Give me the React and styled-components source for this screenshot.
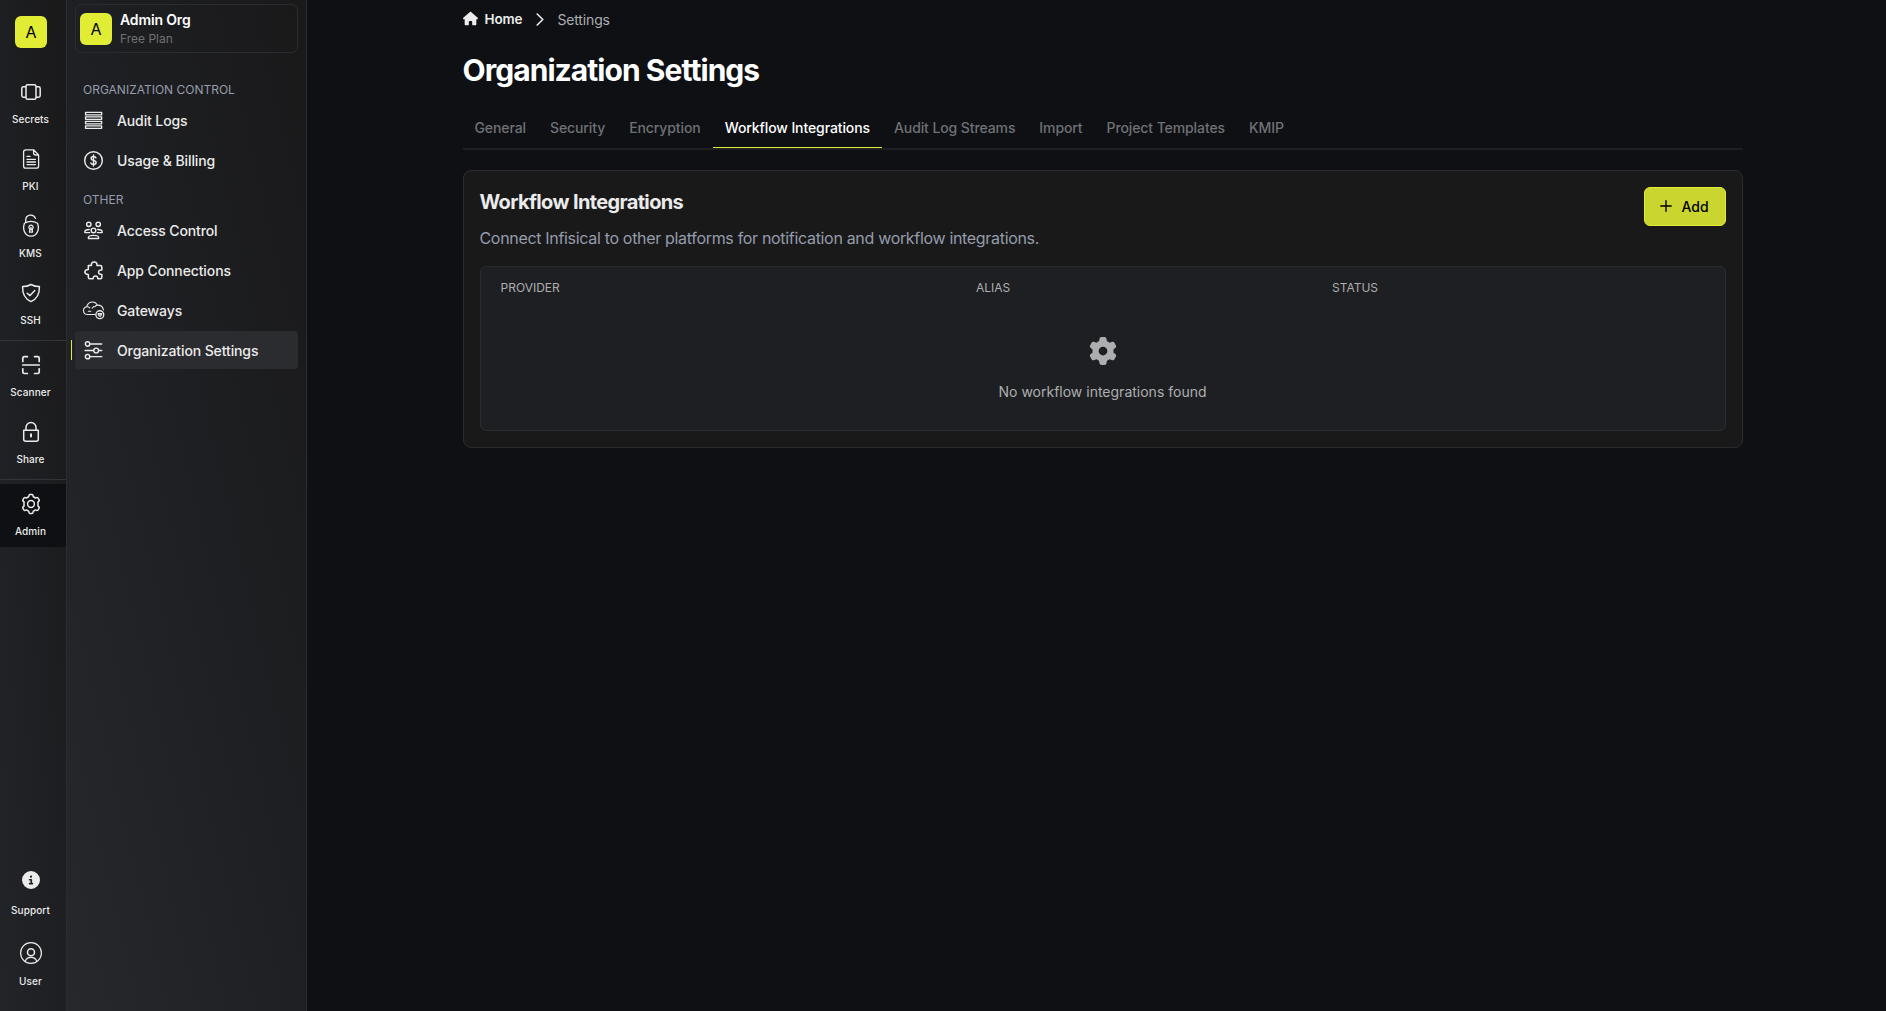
import React from "react";
import styled, { createGlobalStyle } from "styled-components";
import { FaCircleInfo, FaGear, FaHouse } from "react-icons/fa6";

const color = {
  primary: "#e0ed34",
  page: "#0e1014",
  panel: "#19191a",
  surface: "#1e1f22",
  line: "#2b2c30",
  lineStrong: "#323439",
  text: "#ebebeb",
  muted: "#adaeb0",
  dim: "#707174",
  slate: "#959cab",
};

const GlobalStyle = createGlobalStyle`
  *, *::before, *::after { box-sizing: border-box; }
  body {
    margin: 0;
    background: ${color.page};
    color: ${color.text};
    font-family: Inter, "Liberation Sans", sans-serif;
    font-size: 14px;
    -webkit-font-smoothing: antialiased;
  }
  h1, h2, p { margin: 0; }
`;

const Shell = styled.div`
  display: flex;
  height: 1011px;
  overflow: hidden;
  background: ${color.page};
`;

const Rail = styled.nav`
  width: 67px;
  flex: none;
  display: flex;
  flex-direction: column;
  padding: 16px 0 15px;
  border-right: 1px solid ${color.line};
  background: linear-gradient(to top right, #232428, ${color.surface} 50%, ${color.panel});
`;

const Tile = styled.div`
  width: 32px;
  height: 32px;
  flex: none;
  display: flex;
  align-items: center;
  justify-content: center;
  border-radius: 6px;
  background: ${color.primary};
  color: #000;
  font-size: 16px;
  margin-left: ${(p) => p.$inset || 0}px;
`;

const RailGroup = styled.div`
  display: flex;
  flex-direction: column;
  gap: 4px;
  margin-top: ${(p) => (p.$bottom ? "auto" : "24px")};
`;

const RailItem = styled.a`
  height: ${(p) => p.$height || 63}px;
  padding: 8px 4px 0 0;
  display: flex;
  flex-direction: column;
  align-items: center;
  gap: ${(p) => p.$gap || 9}px;
  background: ${(p) => (p.$active ? color.page : "transparent")};
  font-size: 10px;
  line-height: 12px;
  font-weight: 500;
  letter-spacing: 0.01em;

  svg { width: 24px; height: 24px; flex: none; }
`;

const RailLabel = styled.span`
  padding-right: 1px;
`;

const InfoBox = styled.span`
  height: 24px;
  display: flex;
  align-items: center;

  svg { width: 18px; height: 18px; }
`;

const RailRule = styled.div`
  height: 1px;
  background: ${color.lineStrong};
`;

const Sidebar = styled.aside`
  width: 240px;
  flex: none;
  padding: 4px 8px 0;
  border-right: 1px solid ${color.line};
  background: linear-gradient(to top right, #27282c, ${color.surface} 55%, ${color.panel});
`;

const OrgCard = styled.div`
  height: 49px;
  display: flex;
  align-items: center;
  gap: 8px;
  padding: 0 4px;
  border: 1px solid ${color.line};
  border-radius: 6px;
`;

const OrgText = styled.div`
  display: flex;
  flex-direction: column;
`;

const OrgName = styled.span`
  font-size: 14px;
  line-height: 18px;
  font-weight: 600;
  letter-spacing: -0.01em;
  color: #fff;
`;

const OrgPlan = styled.span`
  font-size: 12px;
  line-height: 18px;
  padding-top: 1px;
  margin-bottom: -1px;
  color: ${color.dim};
`;

const SectionLabel = styled.div`
  padding: ${(p) => p.$top}px 8px 2px;
  font-size: 12px;
  line-height: 18px;
  color: ${color.slate};
`;

const MenuList = styled.div`
  display: flex;
  flex-direction: column;
  gap: 2px;
`;

const MenuItem = styled.a`
  position: relative;
  height: 38px;
  display: flex;
  align-items: center;
  gap: 12px;
  padding: 1px 7px 0;
  border-radius: 4px;
  background: ${(p) => (p.$active ? color.line : "transparent")};
  font-size: 14px;
  font-weight: 500;
  line-height: 20px;
  letter-spacing: -0.008em;

  svg { width: 23px; height: 23px; flex: none; }
`;

const ActiveMark = styled.span`
  position: absolute;
  left: -4px;
  top: 9px;
  width: 1px;
  height: 20px;
  background: ${color.primary};
`;

const Main = styled.main`
  flex: 1;
  display: flex;
  justify-content: center;
  padding-left: 12px;
`;

const Content = styled.div`
  width: 1280px;
`;

const Crumbs = styled.div`
  height: 40px;
  display: flex;
  align-items: center;
  padding-bottom: 2px;
  letter-spacing: -0.01em;
`;

const CrumbHome = styled.a`
  display: flex;
  align-items: center;
  gap: 7px;
  font-weight: 600;
  font-size: 13.5px;
  padding-bottom: 1px;
`;

const CrumbCurrent = styled.span`
  color: ${color.muted};
`;

const CrumbArrow = styled.svg`
  width: 8px;
  height: 13px;
  margin: 0 13px 0 14px;
`;

const Title = styled.h1`
  font-size: 30px;
  line-height: 36px;
  font-weight: 650;
  letter-spacing: -0.95px;
  color: #fff;
  margin-top: 12px;
`;

const Tabs = styled.div`
  display: flex;
  height: 42px;
  margin-top: 20px;
  border-bottom: 2px solid ${color.surface};
`;

const Tab = styled.button`
  padding: 0 12px;
  border: 0;
  border-bottom: 1px solid ${(p) => (p.$active ? color.primary : "transparent")};
  background: none;
  font: 500 14px/20px Inter, sans-serif;
  letter-spacing: -0.1px;
  color: ${(p) => (p.$active ? "#fff" : color.dim)};
`;

const Card = styled.section`
  margin-top: 20px;
  padding: 16px;
  border: 1px solid ${color.line};
  border-radius: 8px;
  background: ${color.panel};
`;

const CardHead = styled.div`
  display: flex;
  justify-content: space-between;
  align-items: flex-start;
  height: 39px;
`;

const CardTitle = styled.h2`
  font-size: 20px;
  line-height: 30px;
  font-weight: 650;
  letter-spacing: -0.64px;
`;

const AddButton = styled.button`
  width: 82px;
  height: 39px;
  display: flex;
  align-items: center;
  justify-content: center;
  gap: 9px;
  border: 1px solid ${color.primary};
  border-radius: 6px;
  background: #cad62f;
  color: #000;
  font: 500 14px/20px Inter, sans-serif;

  svg { width: 12px; height: 12px; margin-bottom: 1px; }
`;

const Lead = styled.p`
  font-size: 16px;
  line-height: 24px;
  letter-spacing: -0.32px;
  color: ${color.slate};
`;

const Table = styled.div`
  height: 165px;
  margin-top: 16px;
  border: 1px solid ${color.line};
  border-radius: 6px;
  background: ${color.surface};
`;

const TableHead = styled.div`
  display: grid;
  grid-template-columns: 475.5px 356px 1fr;
  padding: 12px 20px 1px;
  font-size: 12px;
  line-height: 18px;
  color: ${color.muted};
`;

const Empty = styled.div`
  display: flex;
  flex-direction: column;
  align-items: center;
  gap: 17px;
  margin-top: 39px;
  line-height: 20px;
  color: ${color.muted};

  svg { width: 28px; height: 28px; }
`;

const Line = ({ width = 1.5, children }) => (
  <svg viewBox="0 0 24 24" fill="none" stroke="currentColor" strokeWidth={width} strokeLinecap="round" strokeLinejoin="round">
    {children}
  </svg>
);

const icons = {
  secrets: (
    <Line>
      <rect x="7" y="4.7" width="10" height="14.6" rx="1.6" />
      <path d="M6.6 6.8H4.4Q2.8 6.8 2.8 8.4v7.2q0 1.6 1.6 1.6h2.2M17.4 6.8h2.2q1.6 0 1.6 1.6v7.2q0 1.6-1.6 1.6h-2.2" />
    </Line>
  ),
  pki: (
    <Line width={1.3}>
      <path d="M14.6 2.8H6.8q-2.2 0-2.2 2.2v14q0 2.2 2.2 2.2h10.6q2.2 0 2.2-2.2V8zM14.6 2.8V6q0 2 2 2h3M8 9.4h3M8 12.4h8.4M8 15h8.4M8 17.6h8.4" />
    </Line>
  ),
  kms: (
    <Line width={1.3}>
      <path d="M6.7 8.2V6.1a5 5 0 0 1 9.7-1.7" />
      <path d="M5.4 9.2Q12 5.6 18.6 9.2q1.4 3.9.5 7-1.8 6-7.1 6t-7.1-6q-.9-3.1.5-7z" />
      <path d="M10.8 15a2.1 2.1 0 1 1 2.4 0l.3 3.2h-3zM12 13.4v2.4" />
    </Line>
  ),
  ssh: (
    <Line>
      <path d="M12 3.5Q8 5.7 3.6 5.6q-.4 11 8.4 15 8.8-4 8.4-15Q16 5.7 12 3.5z" />
      <path d="m8.2 12.2 2.8 2.4 4.8-5" />
    </Line>
  ),
  scanner: (
    <Line width={1.7}>
      <path d="M3.8 8.4V5.3q0-1.6 1.6-1.6h3M15.6 3.7h3q1.6 0 1.6 1.6v3.1M3.8 15.8v3.1q0 1.6 1.6 1.6h3M15.6 20.5h3q1.6 0 1.6-1.6v-3.1M3.8 12h16.4" />
    </Line>
  ),
  share: (
    <Line>
      <path d="M4.7 10.3h14.6v8.9q0 2-2 2H6.7q-2 0-2-2zM7 10V7.6a5 5 0 0 1 10 0V10" />
      <path d="M12 14.2v2.2" strokeWidth="2" />
    </Line>
  ),
  admin: (
    <Line>
      <path d="M9.7 4.8 10 3.4q.2-.9 1-.9h2q.8 0 1 .9l.3 1.4q1.1.4 2.1 1.3l1.4-.5q.8-.2 1.3.5l1 1.7q.4.8-.2 1.3l-1 1q.2 1.9 0 3.8l1 1q.6.5.2 1.3l-1 1.7q-.5.7-1.3.5l-1.4-.5q-1 .9-2.1 1.3l-.3 1.4q-.2.9-1 .9h-2q-.8 0-1-.9l-.3-1.4q-1.1-.4-2.1-1.3l-1.4.5q-.8.2-1.3-.5l-1-1.7q-.4-.8.2-1.3l1-1q-.2-1.9 0-3.8l-1-1q-.6-.5-.2-1.3l1-1.7q.5-.7 1.3-.5l1.4.5q1-.9 2.1-1.3z" />
      <circle cx="12" cy="12" r="3.4" />
    </Line>
  ),
  user: (
    <Line width={1.2}>
      <circle cx="12" cy="12" r="10.4" />
      <circle cx="12" cy="11.2" r="3.5" strokeWidth="1.5" />
      <path d="M6.2 20.4q1.2-4 5.8-4t5.8 4" />
    </Line>
  ),
  logs: (
    <Line width={1.4}>
      <path d="M3.7 3.6h16.8v2.6H3.7zM3.7 8.2h16.8v2.6H3.7zM3.7 12.9h16.8v2.6H3.7zM3.7 17.6h16.8v2.6H3.7z" />
    </Line>
  ),
  billing: (
    <Line>
      <circle cx="12" cy="12" r="9.2" />
      <path d="M14.6 9.3Q14 7.8 12 7.8q-2.5 0-2.5 2 0 1.6 2.5 2.1 2.7.5 2.7 2.3 0 2-2.7 2-2.2 0-2.8-1.6M12 6.2v11.6" />
    </Line>
  ),
  access: (
    <Line width={1.5}>
      <circle cx="7.1" cy="5.6" r="2.3" />
      <circle cx="16.9" cy="5.6" r="2.3" />
      <circle cx="12" cy="11.9" r="2.4" />
      <path d="M6.7 20.4v-1q0-2.3 5.3-2.3t5.3 2.3v1zM8 14.2H3v-.8q0-2.4 4.6-2.4M16 14.2h5v-.8q0-2.4-4.6-2.4" />
    </Line>
  ),
  apps: (
    <Line width={1.6}>
      <path d="M6.6 6.8h3.2q-.5-3.6 2.9-3.6t2.9 3.6h3.5q1.6 0 1.6 1.6v3q-3.4-.3-3.4 2.3t3.4 2.4v3q0 1.6-1.6 1.6h-2.6q.2-3-2.4-3t-2.5 3H8.2q-1.6 0-1.6-1.6v-2.9q-3.6-.2-3.6-2.6t3.6-2.6z" />
    </Line>
  ),
  gateways: (
    <Line width={1.1}>
      <path d="M13.6 16.2H5.2a4.1 4.1 0 0 1-.3-8.1Q6.4 3.2 11 3.2q3.4 0 5 3.2 5.4-.2 6.4 5M4.9 8.1q2.2-.2 3.2 1.2M16 6.4q-2 .3-2.6 1.8M10.6 9.6l1.8-1.8M6.6 12.8h2.6" />
      <circle cx="18.6" cy="16.4" r="4.1" strokeWidth="1.4" />
      <path d="M16.8 15.4h3.8l-1.2 2.4h-1.4z" strokeWidth="1.4" />
    </Line>
  ),
  settings: (
    <Line>
      <circle cx="5.8" cy="5.2" r="2.3" />
      <circle cx="14.8" cy="12" r="2.5" />
      <circle cx="5.8" cy="18.4" r="2.3" />
      <path d="M8.4 5.2h12.2M3.2 12H12M17.6 12h3M8.4 18.4h12.2" />
    </Line>
  ),
};

const RailLink = ({ icon, label, ...rest }) => (
  <RailItem {...rest}>
    {icon}
    <RailLabel>{label}</RailLabel>
  </RailItem>
);

const MenuLink = ({ icon, label, active }) => (
  <MenuItem $active={active}>
    {active && <ActiveMark />}
    {icon}
    <span>{label}</span>
  </MenuItem>
);

const tabs = ["General", "Security", "Encryption", "Workflow Integrations", "Audit Log Streams", "Import", "Project Templates", "KMIP"];

export default function App() {
  return (
    <Shell>
      <GlobalStyle />
      <Rail>
        <Tile $inset={15}>A</Tile>
        <RailGroup>
          <RailLink icon={icons.secrets} label="Secrets" />
          <RailLink icon={icons.pki} label="PKI" />
          <RailLink icon={icons.kms} label="KMS" />
          <RailLink icon={icons.ssh} label="SSH" />
          <RailRule />
          <RailLink icon={icons.scanner} label="Scanner" />
          <RailLink icon={icons.share} label="Share" />
          <RailRule />
          <RailLink icon={icons.admin} label="Admin" $active />
        </RailGroup>
        <RailGroup $bottom>
          <RailLink
            icon={
              <InfoBox>
                <FaCircleInfo />
              </InfoBox>
            }
            label="Support"
            $height={69}
            $gap={12}
          />
          <RailLink icon={icons.user} label="User" $gap={10} />
        </RailGroup>
      </Rail>
      <Sidebar>
        <OrgCard>
          <Tile>A</Tile>
          <OrgText>
            <OrgName>Admin Org</OrgName>
            <OrgPlan>Free Plan</OrgPlan>
          </OrgText>
        </OrgCard>
        <SectionLabel $top={28}>ORGANIZATION CONTROL</SectionLabel>
        <MenuList>
          <MenuLink icon={icons.logs} label="Audit Logs" />
          <MenuLink icon={icons.billing} label="Usage & Billing" />
        </MenuList>
        <SectionLabel $top={12}>OTHER</SectionLabel>
        <MenuList>
          <MenuLink icon={icons.access} label="Access Control" />
          <MenuLink icon={icons.apps} label="App Connections" />
          <MenuLink icon={icons.gateways} label="Gateways" />
          <MenuLink icon={icons.settings} label="Organization Settings" active />
        </MenuList>
      </Sidebar>
      <Main>
        <Content>
          <Crumbs>
            <CrumbHome>
              <FaHouse size={15} />
              Home
            </CrumbHome>
            <CrumbArrow viewBox="0 0 8 13" fill="none" stroke="currentColor" strokeWidth="1.6" strokeLinecap="round" strokeLinejoin="round">
              <path d="m1.2 1 5.6 5.5L1.2 12" />
            </CrumbArrow>
            <CrumbCurrent>Settings</CrumbCurrent>
          </Crumbs>
          <Title>Organization Settings</Title>
          <Tabs>
            {tabs.map((t) => (
              <Tab key={t} $active={t === "Workflow Integrations"}>{t}</Tab>
            ))}
          </Tabs>
          <Card>
            <CardHead>
              <CardTitle>Workflow Integrations</CardTitle>
              <AddButton>
                <svg viewBox="0 0 12 12" fill="none" stroke="currentColor" strokeWidth="1.4" strokeLinecap="round">
                  <path d="M6 .8v10.4M.8 6h10.4" />
                </svg>
                Add
              </AddButton>
            </CardHead>
            <Lead>Connect Infisical to other platforms for notification and workflow integrations.</Lead>
            <Table>
              <TableHead>
                <span>PROVIDER</span>
                <span>ALIAS</span>
                <span>STATUS</span>
              </TableHead>
              <Empty>
                <FaGear />
                No workflow integrations found
              </Empty>
            </Table>
          </Card>
        </Content>
      </Main>
    </Shell>
  );
}
